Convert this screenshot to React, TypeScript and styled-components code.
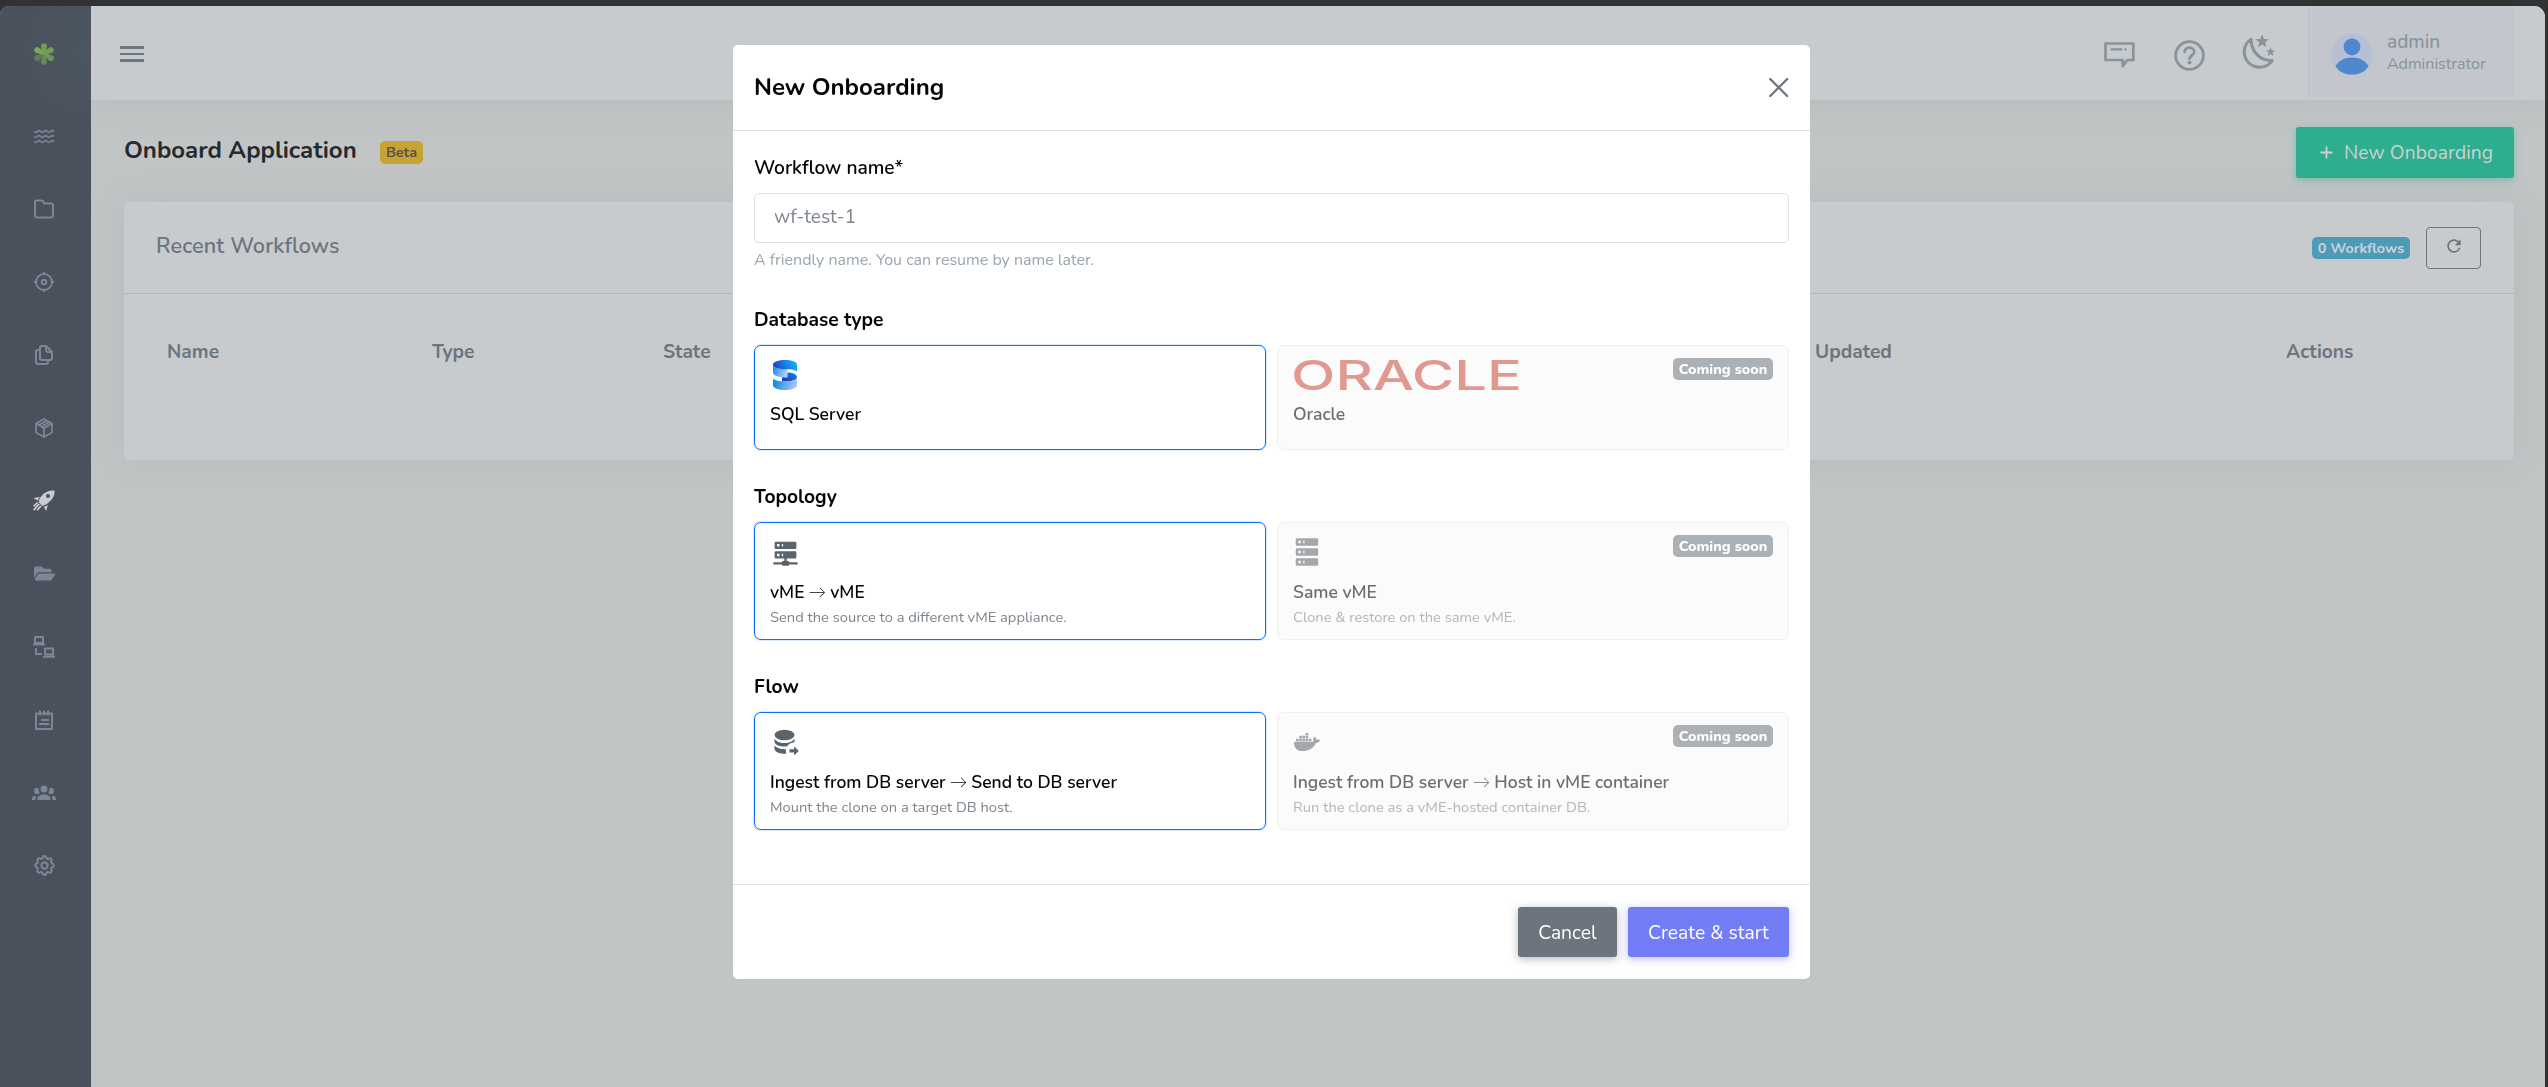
import React from "react";
import styled, { createGlobalStyle } from "styled-components";
import { FaDocker, FaFolderOpen } from "react-icons/fa";
import { TbSettings } from "react-icons/tb";
import { MdRefresh } from "react-icons/md";

const font = `Nunito, "Liberation Sans", sans-serif`;

const Global = createGlobalStyle`
  *, *::before, *::after { box-sizing: border-box; }
  html, body { margin: 0; background: #323232; }
  body { font-family: ${font}; overflow: hidden; }
  button, input { font-family: inherit; margin: 0; }
  svg { display: block; flex: none; }
`;

interface TypeProps {
  $size: number;
  $weight?: number;
  $spacing?: number;
  $line?: number;
  $color: string;
}

const Type = styled.span<TypeProps>`
  display: block;
  white-space: nowrap;
  font-size: ${p => p.$size}px;
  font-weight: ${p => p.$weight ?? 400};
  letter-spacing: ${p => (p.$spacing ? `${p.$spacing}px` : "normal")};
  line-height: ${p => p.$line ?? 28}px;
  color: ${p => p.$color};
`;

const Arrow = styled.span`
  display: inline-flex;
  justify-content: center;
  width: 16.5px;
  font-family: Lato, sans-serif;
  font-weight: 300;
  line-height: 1;
`;

const Shell = styled.div`
  height: 1087px;
  padding: 6px 3px 0 0;
`;

const Frame = styled.div`
  display: flex;
  height: 100%;
  overflow: hidden;
  border-radius: 9px 11px 0 0;
  background: #c1c5c6;
`;

const Sidebar = styled.aside`
  position: relative;
  z-index: 2;
  flex: none;
  width: 91px;
  background: radial-gradient(circle at 91px 44px, #4a5660 0, #4a505c 95px);
`;

const Brand = styled.div`
  display: grid;
  place-items: center;
  height: 94px;
  padding: 2px 3px 0 0;
`;

const NavItem = styled.div<{ $active?: boolean }>`
  display: grid;
  place-items: center;
  height: 73px;
  padding: 0 3px 2px 0;
  color: ${p => (p.$active ? "#c9cccf" : "#7b8795")};
`;

const Main = styled.main`
  flex: 1;
  min-width: 0;
`;

const Topbar = styled.header`
  display: flex;
  justify-content: space-between;
  height: 94px;
  padding: 0 31px 0 29px;
  background: #c7cbce;
  box-shadow: 0 0 35px rgba(154, 161, 151, 0.35);
`;

const Burger = styled.div`
  display: flex;
  flex-direction: column;
  gap: 4px;
  width: 24px;
  padding-top: 40px;
  i {
    height: 2.66px;
    background: #6c7680;
  }
`;

const Tools = styled.div`
  display: flex;
  color: #87949b;
`;

const Tool = styled.div<{ $top: number; $gap: number }>`
  padding-top: ${p => p.$top}px;
  margin-right: ${p => p.$gap}px;
`;

const Account = styled.div`
  display: flex;
  gap: 14px;
  width: 206px;
  height: 91px;
  padding: 27px 0 0 22px;
  background: #c3c6cd;
  border: solid #bdc1c8;
  border-width: 0 1px;
`;

const AccountText = styled.div`
  margin-top: -3px;
`;

const Content = styled.div`
  padding: 27px 31px 0 33px;
`;

const PageHead = styled.div`
  display: flex;
  align-items: center;
  height: 51px;
  margin-bottom: 24px;
`;

const PageTitle = styled.div`
  width: 256px;
  padding-bottom: 5px;
`;

const Badge = styled.span<{ $bg: string; $color: string; $width: number; $height?: number }>`
  display: block;
  width: ${p => p.$width}px;
  height: ${p => p.$height ?? 22}px;
  border-radius: 5px;
  background: ${p => p.$bg};
  color: ${p => p.$color};
  font-size: 14.4px;
  font-weight: 700;
  line-height: ${p => p.$height ?? 22}px;
  text-align: center;
  white-space: nowrap;
`;

const SoonBadge = styled(Badge)`
  margin-top: -2px;
  font-weight: 800;
`;

const NewButton = styled.button`
  display: flex;
  align-items: center;
  gap: 11px;
  width: 218px;
  height: 51px;
  margin-left: auto;
  padding: 0 0 0 24px;
  border: 0;
  border-radius: 3px;
  background: #2fad8f;
  color: #c9d3d1;
  box-shadow: 0 2px 7px rgba(47, 173, 143, 0.5);
  font-size: 19.2px;
  letter-spacing: 0.12px;
  white-space: nowrap;
`;

const Panel = styled.section`
  height: 258px;
  border-radius: 5px;
  background: #c7cbce;
  box-shadow: 0 0 35px rgba(154, 161, 151, 0.3);
`;

const PanelHead = styled.div`
  display: flex;
  align-items: center;
  height: 92px;
  padding: 0 33px 0 32px;
  border-bottom: 1px solid #afb5ba;
`;

const PanelTitle = styled.div`
  flex: 1;
  padding-bottom: 3px;
`;

const Refresh = styled.button`
  display: grid;
  place-items: center;
  width: 55px;
  height: 42px;
  margin-left: 16px;
  padding: 0 0 3px;
  border: 1px solid #6c757d;
  border-radius: 4px;
  background: none;
  color: #6c757d;
`;

const Columns = styled.div`
  display: grid;
  grid-template-columns: 265px 231px 1152px 471px 1fr;
  padding: 44px 0 0 43px;
`;

const Backdrop = styled.div`
  position: fixed;
  inset: 0;
  z-index: 5;
  display: flex;
  justify-content: center;
  align-items: flex-start;
  padding: 45px 5px 0 0;
`;

const Dialog = styled.div`
  width: 1077px;
  height: 934px;
  border-radius: 5px;
  background: #fff;
`;

const DialogHead = styled.div`
  display: flex;
  align-items: center;
  justify-content: space-between;
  height: 86px;
  padding: 0 21px;
  border-bottom: 1px solid #dee2e6;
`;

const DialogTitle = styled.div`
  padding-bottom: 2px;
`;

const DialogBody = styled.div`
  height: 753px;
  padding: 23px 21px 0;
`;

const Input = styled.input`
  display: block;
  width: 100%;
  height: 50px;
  margin: 11px 0 5px;
  padding: 0 19px 2px;
  border: 1px solid #dee2e6;
  border-radius: 5px;
  background: #fff;
  font-size: 19.2px;
  letter-spacing: -0.1px;
  &::placeholder {
    color: #7d868e;
    opacity: 1;
  }
`;

const Field = styled.div`
  margin-bottom: 34px;
`;

const Group = styled.div`
  margin-bottom: 33px;
`;

const Options = styled.div`
  display: grid;
  grid-template-columns: 1fr 1fr;
  gap: 11px;
  margin-top: 11px;
`;

const Option = styled.div<{ $height: number; $selected?: boolean }>`
  height: ${p => p.$height}px;
  padding: 14px 15px 0;
  border: 1px solid ${p => (p.$selected ? "#0d6efd" : "#eeeff0")};
  border-radius: 7px;
  background: ${p => (p.$selected ? "#fff" : "#fbfbfb")};
  box-shadow: ${p => (p.$selected ? "0 0 0 1px rgba(13, 110, 253, 0.15)" : "none")};
`;

const OptionTop = styled.div<{ $gap: number }>`
  display: flex;
  align-items: flex-start;
  justify-content: space-between;
  height: 30px;
  margin-bottom: ${p => p.$gap}px;
`;

const Glyph = styled.div<{ $muted?: boolean; $left: number }>`
  display: flex;
  align-items: center;
  height: 30px;
  padding-left: ${p => Math.max(p.$left, 0)}px;
  margin-left: ${p => Math.min(p.$left, 0)}px;
  color: ${p => (p.$muted ? "#a4a8ac" : "#5b636b")};
`;

const DialogFoot = styled.div`
  display: flex;
  justify-content: flex-end;
  gap: 11px;
  height: 95px;
  padding: 22px 21px;
  border-top: 1px solid #dee2e6;
`;

const Action = styled.button<{ $bg: string; $width: number; $glow: string }>`
  width: ${p => p.$width}px;
  height: 50px;
  padding: 0;
  border: 0;
  border-radius: 3px;
  background: ${p => p.$bg};
  box-shadow: 0 2px 8px ${p => p.$glow};
  color: #fff;
  font-size: 19.3px;
  white-space: nowrap;
`;

const Line = ({ children, w = 2 }: { children: React.ReactNode; w?: number }) => (
  <svg width="24" height="24" viewBox="0 0 24 24" fill="none" stroke="currentColor" strokeWidth={w} strokeLinejoin="round">
    {children}
  </svg>
);

const Solid = ({ d, size = 24 }: { d: string; size?: number }) => (
  <svg width={size} height={size} viewBox="0 0 24 24" fill="currentColor">
    <path d={d} />
  </svg>
);

const Logo = () => (
  <svg width="20" height="22" viewBox="-10 -11 20 22">
    {[
      [180, "#668c57"],
      [120, "#6f9656"],
      [240, "#5f7f5a"],
      [60, "#729d56"],
      [0, "#739f55"],
      [300, "#7cab50"],
    ].map(([angle, fill]) => (
      <path
        key={angle}
        d="M0 .5C-1.8-2.4-2.9-5.2-2.9-8a2.9 2.8 0 0 1 5.8 0C2.9-5.2 1.8-2.4 0 .5z"
        fill={fill as string}
        transform={`rotate(${angle})`}
      />
    ))}
  </svg>
);

const wave = "q1.67 1.6 3.33 0t3.33 0t3.33 0t3.33 0t3.33 0t3.33 0";
const Waves = () => (
  <Line w={1.7}>
    <path d={`M2 7.5${wave}M2 12.5${wave}M2 17.5${wave}`} />
  </Line>
);

const Folder = () => (
  <Solid d="M19,5.5H12.72l-.32-1a3,3,0,0,0-2.84-2H5a3,3,0,0,0-3,3v13a3,3,0,0,0,3,3H19a3,3,0,0,0,3-3V8.5A3,3,0,0,0,19,5.5Zm1,13a1,1,0,0,1-1,1H5a1,1,0,0,1-1-1V5.5a1,1,0,0,1,1-1H9.56a1,1,0,0,1,.95.68l.54,1.64A1,1,0,0,0,12,7.5h7a1,1,0,0,1,1,1Z" />
);

const Target = () => (
  <Line w={1.9}>
    <circle cx="12" cy="12" r="8" />
    <circle cx="12" cy="12" r="2.3" />
    <path d="M12 2v3M12 19v3M2 12h3M19 12h3" />
  </Line>
);

const Copy = () => (
  <Solid d="M21,8.94a1.31,1.31,0,0,0-.06-.27l0-.09a1.07,1.07,0,0,0-.19-.28h0l-6-6h0a1.07,1.07,0,0,0-.28-.19.32.32,0,0,0-.09,0A.88.88,0,0,0,14.05,2H10A3,3,0,0,0,7,5V6H6A3,3,0,0,0,3,9V19a3,3,0,0,0,3,3h8a3,3,0,0,0,3-3V18h1a3,3,0,0,0,3-3V9S21,9,21,8.94ZM15,5.41,17.59,8H16a1,1,0,0,1-1-1ZM15,19a1,1,0,0,1-1,1H6a1,1,0,0,1-1-1V9A1,1,0,0,1,6,8H7v7a3,3,0,0,0,3,3h5Zm4-4a1,1,0,0,1-1,1H10a1,1,0,0,1-1-1V5a1,1,0,0,1,1-1h3V7a3,3,0,0,0,3,3h3Z" />
);

const Package = () => (
  <Line w={1.8}>
    <path d="M12 3l8 4.5v9L12 21l-8-4.5v-9zM4 7.5l8 4.6 8-4.6M12 12.1V21M7 9l7.7-4.4M9.6 10.6l7.8-4.5" />
  </Line>
);

const Rocket = () => (
  <svg width="24" height="24" viewBox="0 0 24 24" fill="currentColor">
    <path
      fillRule="evenodd"
      d="M22.6 1.700C17.800 1.100 12.800 2.900 9.400 7.100 7.800 9.100 6.900 11.100 6.600 13.100l3.600 3.800c2.200-.4 4.200-1.400 6.200-3.100C20.800 10.100 23 5.900 22.600 1.700zM16 5.100a2 2 0 1 1 0 4 2 2 0 0 1 0-4z"
    />
    <path d="M7.800 7.700L1.400 9.300l4.200 2.300zM15.800 15.900l-1.600 6.200-2.400-4.200z" />
    <path d="M5.600 13.500L1.600 17.300M7.200 14.900L1.600 21.100M9 16.900L5 21.300" stroke="currentColor" strokeWidth="1.7" />
  </svg>
);

const Laptops = () => (
  <Line>
    <path d="M3 2h8v6H3zM13 13.6h8v6h-8zM1 9.6h12M11 21.8h12M4 13v6h6" />
  </Line>
);

const Notepad = () => (
  <Line>
    <path d="M4 5.5h16v15.5H4zM8 2.5v5M12 2.5v5M16 2.5v5M9 12h8M7 16h10" />
  </Line>
);

const People = () => (
  <Solid d="M12,4.5A3.5,3.5 0 0,1 15.5,8A3.5,3.5 0 0,1 12,11.5A3.5,3.5 0 0,1 8.5,8A3.5,3.5 0 0,1 12,4.5M5,7C5.56,7 6.08,7.15 6.53,7.42C6.38,8.85 6.8,10.27 7.66,11.38C7.16,12.34 6.16,13 5,13A3,3 0 0,1 2,10A3,3 0 0,1 5,7M19,7A3,3 0 0,1 22,10A3,3 0 0,1 19,13C17.84,13 16.84,12.34 16.34,11.38C17.2,10.27 17.62,8.85 17.47,7.42C17.92,7.15 18.44,7 19,7M5.5,17.25C5.5,15.18 8.41,13.5 12,13.5C15.59,13.5 18.5,15.18 18.5,17.25V19H5.5V17.25M0,19V17.5C0,16.11 1.89,14.94 4.45,14.6C3.86,15.28 3.5,16.22 3.5,17.25V19H0M24,19H20.5V17.25C20.5,16.22 20.14,15.28 19.55,14.6C22.11,14.94 24,16.11 24,17.5V19Z" />
);

const Comment = () => (
  <svg width="31" height="27" viewBox="0 0 31 27" fill="none" stroke="currentColor" strokeWidth="2.7">
    <path d="M1.5 1.5h27.8V18h-6l-4.6 6.2V18H1.5z" strokeLinejoin="round" />
    <path d="M7.6 7.4h9.6M21.4 7.4h.2" strokeLinecap="round" strokeWidth="2.4" />
  </svg>
);

const Help = () => (
  <svg width="31" height="31" viewBox="0 0 31 31" fill="none" stroke="currentColor" strokeWidth="2.8">
    <circle cx="15.5" cy="15.5" r="13.9" />
    <path d="M10.6 11.8c.6-5.600 9.600-5.400 9.600.2 0 3.600-4.700 3.400-4.700 6.800" strokeLinecap="round" />
    <circle cx="15.5" cy="22.6" r="1.9" fill="currentColor" stroke="none" />
  </svg>
);

const star = (cx: number, cy: number, r: number) =>
  Array.from({ length: 10 }, (_, i) => {
    const radius = i % 2 ? r * 0.42 : r;
    const a = (i * Math.PI) / 5 - Math.PI / 2;
    return `${cx + radius * Math.cos(a)},${cy + radius * Math.sin(a)}`;
  }).join(" ");

const Moon = () => (
  <svg width="34" height="37" viewBox="0 0 34 37">
    <path
      d="M9.2 6.2C3 10 .8 17.5 3.2 24.2c3.6 9.600 15 12.800 23 7.600 2.200-1.400 3.600-3 4-4.400C19.500 28.500 9 19.500 9.200 6.200z"
      fill="none"
      stroke="currentColor"
      strokeWidth="3"
      strokeLinejoin="round"
    />
    <polygon points={star(20.2, 8.4, 7.2)} fill="currentColor" />
    <polygon points={star(28.6, 19, 4.8)} fill="currentColor" />
  </svg>
);

const Avatar = () => (
  <svg width="42" height="42" viewBox="0 0 42 42">
    <circle cx="21" cy="21" r="20.8" fill="#b6bfd3" />
    <circle cx="21" cy="14" r="8.4" fill="#4f88cf" />
    <path d="M4.4 33.5C7 28 13 24.6 21 24.6s14 3.4 16.6 8.9C34 38.8 28 41.6 21 41.6S8 38.8 4.4 33.5z" fill="#4f88cf" />
  </svg>
);

const SqlServer = () => (
  <svg width="24" height="30" viewBox="0 0 24 30">
    <defs>
      <linearGradient id="sq1" x1="0" y1="0" x2="1" y2="0.3">
        <stop offset="0" stopColor="#0f86e0" />
        <stop offset="1" stopColor="#a9d0fc" />
      </linearGradient>
      <linearGradient id="sq2" x1="0.1" y1="0.6" x2="1" y2="0.4">
        <stop offset="0" stopColor="#1f47cc" />
        <stop offset="1" stopColor="#0fb4fd" />
      </linearGradient>
      <linearGradient id="sq3" x1="1" y1="0" x2="0" y2="0.8">
        <stop offset="0" stopColor="#0f8fe8" />
        <stop offset="1" stopColor="#2138b0" />
      </linearGradient>
      <linearGradient id="sq4" x1="0" y1="0.4" x2="1" y2="0.6">
        <stop offset="0" stopColor="#058bd8" />
        <stop offset="1" stopColor="#b3c6fd" />
      </linearGradient>
    </defs>
    <path d="M0 4.5C0 8.5 8 9.3 14.5 9.3V17.6C6 17.6 0 15.5 0 12.5z" fill="url(#sq1)" />
    <path d="M0 4.5C0 2 5.4 0 12 0s12 2 12 4.5v7C22 9.8 19 9.3 14.5 9.3 6 9.3 0 8 0 4.5z" fill="url(#sq2)" />
    <path d="M14.5 12.4C20 12.4 24 14.4 24 17s-4 4.2-10 4.2H9v-4c2 .3 3.5.4 5.5.4z" fill="url(#sq3)" />
    <path d="M0 18.8c2 1.6 5 2.4 9 2.4h5c6 0 10-1.7 10-4.2v8.5c0 2.5-5.4 4.5-12 4.5S0 28 0 25.5z" fill="url(#sq4)" />
  </svg>
);

const Wordmark = styled.svg`
  overflow: visible;
  text {
    font: 500 40.5px Inter, sans-serif;
    fill: #e1988e;
  }
`;

const OracleLogo = () => (
  <Wordmark width="230" height="30" viewBox="0 0 230 30">
    <text x="-2" y="29.6" textLength="231" lengthAdjust="spacingAndGlyphs">ORACLE</text>
  </Wordmark>
);

const ServerNetwork = () => (
  <Solid
    size={29}
    d="M13,19H14A1,1 0 0,1 15,20H22V22H15A1,1 0 0,1 14,23H10A1,1 0 0,1 9,22H2V20H9A1,1 0 0,1 10,19H11V17H4A1,1 0 0,1 3,16V12A1,1 0 0,1 4,11H20A1,1 0 0,1 21,12V16A1,1 0 0,1 20,17H13V19M4,3H20A1,1 0 0,1 21,4V8A1,1 0 0,1 20,9H4A1,1 0 0,1 3,8V4A1,1 0 0,1 4,3M9,7H10V5H9V7M9,15H10V13H9V15M5,5V7H7V5H5M5,13V15H7V13H5Z"
  />
);

const Server = () => (
  <Solid
    size={30}
    d="M4,1H20A1,1 0 0,1 21,2V6A1,1 0 0,1 20,7H4A1,1 0 0,1 3,6V2A1,1 0 0,1 4,1M4,9H20A1,1 0 0,1 21,10V14A1,1 0 0,1 20,15H4A1,1 0 0,1 3,14V10A1,1 0 0,1 4,9M4,17H20A1,1 0 0,1 21,18V22A1,1 0 0,1 20,23H4A1,1 0 0,1 3,22V18A1,1 0 0,1 4,17M9,5H10V3H9V5M9,13H10V11H9V13M9,21H10V19H9V21M5,3V5H7V3H5M5,11V13H7V11H5M5,19V21H7V19H5Z"
  />
);

const DatabaseArrow = () => (
  <svg width="25" height="26" viewBox="0 0 25 26" fill="currentColor">
    <ellipse cx="10.5" cy="6" rx="10" ry="5.2" />
    <path d="M.5 9.3c1 3 5 4.8 10 4.8S19.5 12.3 20.5 9.3v4c-3.4.2-6 1.8-7.3 4-5.8.9-12.7-1-12.7-4.8zM.5 16.3c1.4 2.6 6 4.2 11.6 3.9-.4 1.6-.3 3 .2 4.6C6 25 .5 23 .5 19.8z" />
    <path d="M15.5 20.3h4.6v-3l4.7 4.6-4.7 4.6v-3h-4.6z" />
  </svg>
);

const Close = () => (
  <svg width="20" height="20" viewBox="0 0 20 20" fill="none" stroke="#6c757d" strokeWidth="2.3" strokeLinecap="round">
    <path d="M1.2 1l17 17M18.2 1l-17 17" />
  </svg>
);

interface ChoiceProps {
  icon: React.ReactNode;
  left?: number;
  title: string;
  note?: string;
  selected?: boolean;
  compact?: boolean;
}

const withArrow = (title: string) => {
  const [from, to] = title.split("→");
  return to ? <>{from}<Arrow>→</Arrow>{to}</> : title;
};

const Choice = ({ icon, left = 0, title, note, selected, compact }: ChoiceProps) => (
  <Option $height={compact ? 105 : 118} $selected={selected}>
    <OptionTop $gap={compact ? 11 : 12}>
      <Glyph $left={left} $muted={!selected}>{icon}</Glyph>
      {!selected && (
        <SoonBadge $bg="#acb1b5" $color="#fff" $width={100}>
          Coming soon
        </SoonBadge>
      )}
    </OptionTop>
    <Type $size={17.5} $weight={600} $line={26} $color={selected ? "#050505" : "#6c6d6e"}>
      {withArrow(title)}
    </Type>
    {note && (
      <Type $size={14.7} $line={24} $color={selected ? "#7d858d" : "#b2b6ba"}>
        {note}
      </Type>
    )}
  </Option>
);

const navIcons = [
  <Waves />, <Folder />, <Target />, <Copy />, <Package />, <Rocket />,
  <FaFolderOpen size={21} />, <Laptops />, <Notepad />, <People />, <TbSettings size={25} />,
];

const columns = ["Name", "Type", "State", "Updated", "Actions"];

export default function App() {
  return (
    <>
      <Global />
      <Shell>
        <Frame>
          <Sidebar>
            <Brand><Logo /></Brand>
            {navIcons.map((icon, i) => (
              <NavItem key={i} $active={i === 5}>{icon}</NavItem>
            ))}
          </Sidebar>
          <Main>
            <Topbar>
              <Burger><i /><i /><i /></Burger>
              <Tools>
                <Tool $top={36} $gap={39}><Comment /></Tool>
                <Tool $top={33.5} $gap={37}><Help /></Tool>
                <Tool $top={27} $gap={32}><Moon /></Tool>
                <Account>
                  <Avatar />
                  <AccountText>
                    <Type $size={19} $weight={500} $line={25} $color="#87949b">admin</Type>
                    <Type $size={16} $line={19} $color="#87949b">Administrator</Type>
                  </AccountText>
                </Account>
              </Tools>
            </Topbar>
            <Content>
              <PageHead>
                <PageTitle>
                  <Type $size={24} $weight={700} $color="#272a2d">Onboard Application</Type>
                </PageTitle>
                <Badge $bg="#c8a233" $color="#51534f" $width={43} $height={23}>Beta</Badge>
                <NewButton>
                  <svg width="13" height="13" viewBox="0 0 13 13" stroke="currentColor" strokeWidth="1.8">
                    <path d="M6.5 .5v12M.5 6.5h12" />
                  </svg>
                  New Onboarding
                </NewButton>
              </PageHead>
              <Panel>
                <PanelHead>
                  <PanelTitle>
                    <Type $size={21.6} $weight={600} $spacing={0.1} $color="#6c757e">Recent Workflows</Type>
                  </PanelTitle>
                  <Badge $bg="#4d9bb7" $color="#cbd3d7" $width={98}>0 Workflows</Badge>
                  <Refresh><MdRefresh size={20} /></Refresh>
                </PanelHead>
                <Columns>
                  {columns.map(label => (
                    <Type key={label} $size={19.2} $weight={700} $color="#6c757e">{label}</Type>
                  ))}
                </Columns>
              </Panel>
            </Content>
          </Main>
        </Frame>
      </Shell>
      <Backdrop>
        <Dialog>
          <DialogHead>
            <DialogTitle>
              <Type $size={24} $weight={700} $color="#050505">New Onboarding</Type>
            </DialogTitle>
            <Close />
          </DialogHead>
          <DialogBody>
            <Field>
              <Type $size={19.2} $weight={600} $color="#050505">Workflow name*</Type>
              <Input placeholder="wf-test-1" />
              <Type $size={16} $line={24} $color="#98a6ad">A friendly name. You can resume by name later.</Type>
            </Field>
            <Group>
              <Type $size={19.2} $weight={700} $color="#050505">Database type</Type>
              <Options>
                <Choice compact selected left={3} icon={<SqlServer />} title="SQL Server" />
                <Choice compact icon={<OracleLogo />} title="Oracle" />
              </Options>
            </Group>
            <Group>
              <Type $size={19.2} $weight={700} $color="#050505">Topology</Type>
              <Options>
                <Choice selected left={0.5} icon={<ServerNetwork />} title="vME → vME" note="Send the source to a different vME appliance." />
                <Choice left={-1} icon={<Server />} title="Same vME" note="Clone & restore on the same vME." />
              </Options>
            </Group>
            <Group>
              <Type $size={19.2} $weight={700} $color="#050505">Flow</Type>
              <Options>
                <Choice selected left={4} icon={<DatabaseArrow />} title="Ingest from DB server → Send to DB server" note="Mount the clone on a target DB host." />
                <Choice left={1} icon={<FaDocker size={26} />} title="Ingest from DB server → Host in vME container" note="Run the clone as a vME-hosted container DB." />
              </Options>
            </Group>
          </DialogBody>
          <DialogFoot>
            <Action $bg="#6c757d" $glow="rgba(108,117,125,.5)" $width={99}>Cancel</Action>
            <Action $bg="#727cf5" $glow="rgba(114,124,245,.5)" $width={161}>Create &amp; start</Action>
          </DialogFoot>
        </Dialog>
      </Backdrop>
    </>
  );
}
